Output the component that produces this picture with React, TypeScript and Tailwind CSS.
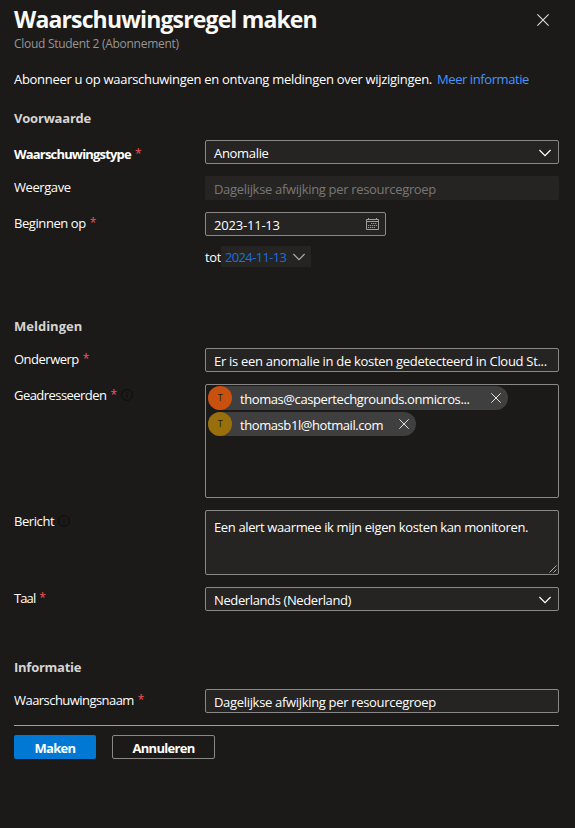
import type { ReactNode } from 'react';

function Chevron({ className = '' }: { className?: string }) {
  return (
    <svg viewBox="0 0 12 8" width="12" height="8" fill="none" stroke="currentColor" className={className}>
      <path d="M0.4 1 L6 6.6 L11.6 1" strokeWidth="1.2" />
    </svg>
  );
}

function Cross({ size, className = '' }: { size: number; className?: string }) {
  return (
    <svg viewBox="0 0 12 12" width={size} height={size} fill="none" stroke="currentColor" className={className}>
      <path d="M0.4 0.4 L11.6 11.6 M11.6 0.4 L0.4 11.6" strokeWidth="1.1" />
    </svg>
  );
}

function Calendar() {
  return (
    <svg viewBox="0 0 13 12" width="13" height="12" fill="none" stroke="#a39b98" className="mb-0.5 shrink-0">
      <path d="M0.5 1.5 H12.5 V11.5 H0.5 Z M0.5 3.5 H12.5 M2.5 0 V2 M10.5 0 V2" strokeWidth="1" />
      <path d="M5 5.5 H11 M2 7.5 H11 M2 9.5 H9" stroke="#8f93a8" strokeWidth="1" strokeDasharray="1.3 0.7" />
    </svg>
  );
}

function InfoIcon() {
  return (
    <svg viewBox="0 0 12 12" width="12" height="12" fill="none" stroke="#0d0c0b" className="ml-1 shrink-0">
      <circle cx="6" cy="6" r="5.4" strokeWidth="0.9" />
      <path d="M6 5 V9 M6 3 V4" strokeWidth="0.8" />
    </svg>
  );
}

function Label({ children, required, info, className = '' }: { children: ReactNode; required?: boolean; info?: boolean; className?: string }) {
  return (
    <div className={`flex h-6 w-[191px] shrink-0 items-center tracking-[-0.42px] whitespace-nowrap ${className}`}>
      {children}
      {required && <span className="ml-1 text-[12px] font-normal text-[#f1555b]">*</span>}
      {info && <InfoIcon />}
    </div>
  );
}

const field = 'flex h-6 items-center rounded-[2px] border border-[#8a8886] bg-[#252423] px-2 pt-px whitespace-nowrap';

function Chip({ initialColor, width, children }: { initialColor: string; width: string; children: ReactNode }) {
  return (
    <div className={`flex h-6 items-center rounded-full bg-[#3f3f3f] pr-[7px] ${width}`}>
      <span className={`flex size-6 items-center justify-center rounded-full text-[9px] text-[#201a12] ${initialColor}`}>T</span>
      <span className="ml-2 flex-1 pt-0.5 tracking-[-0.42px] whitespace-nowrap">{children}</span>
      <Cross size={10} className="text-[#f3f2f1]" />
    </div>
  );
}

export default function App() {
  return (
    <main className="h-[828px] w-[575px] overflow-hidden bg-[#1b1a19] px-[14px] pt-[5px] pr-4 font-['Open_Sans','Noto_Sans',sans-serif] text-[13px] leading-[18px] tracking-[-0.32px] text-white">
      <header className="flex h-[47px] items-start justify-between">
        <div>
          <h1 className="text-[23px] leading-[29px] font-bold tracking-[-0.85px] whitespace-nowrap text-[#faf9f8]">Waarschuwingsregel maken</h1>
          <p className="pt-px text-[12px] leading-[18px] tracking-[-0.29px] text-[#979593]">Cloud Student 2 (Abonnement)</p>
        </div>
        <Cross size={12} className="mt-[9px] mr-[10px] text-[#e1dfdd]" />
      </header>

      <p className="mt-[18px] whitespace-nowrap">
        <span className="tracking-[-0.3px]">Abonneer u op waarschuwingen en ontvang meldingen over wijzigingen.</span>
        <a className="ml-[5px] tracking-[-0.42px] text-[#4894fe]">Meer informatie</a>
      </p>

      <h2 className="mt-[21px] font-bold tracking-[-0.2px] text-[#d6d4d2]">Voorwaarde</h2>
      <section className="mt-[13px] flex flex-col gap-3">
        <div className="flex h-6">
          <Label required className="pt-1"><b className="font-bold tracking-[-0.82px]">Waarschuwingstype</b></Label>
          <div className={`${field} flex-1 justify-between pr-[7px]`}>
            <span>Anomalie</span>
            <Chevron />
          </div>
        </div>
        <div className="flex h-6">
          <Label className="pb-0.5">Weergave</Label>
          <div className="flex h-6 flex-1 items-center rounded-[2px] bg-[#252423] px-[9px] pt-0.5 text-[#797775]">Dagelijkse afwijking per resourcegroep</div>
        </div>
        <div className="flex h-6">
          <Label required className="pb-0.5">Beginnen op</Label>
          <div className={`${field} w-[181px] justify-between pr-[6px]`}>
            <span className="tracking-[-0.2px]">2023-11-13</span>
            <Calendar />
          </div>
        </div>
      </section>
      <div className="mt-[10px] ml-[191px] flex h-[21px] items-center">
        <span className="w-4">tot</span>
        <div className="flex h-[21px] w-[90px] items-center justify-between bg-[#252423] pr-[6px] pl-1 text-[#1571dc]">
          <span className="pt-px tracking-[-0.65px]">2024-11-13</span>
          <Chevron className="text-[#b3a9a3]" />
        </div>
      </div>

      <h2 className="mt-[50px] font-bold tracking-[0px] text-[#d6d4d2]">Meldingen</h2>
      <section className="mt-[13px] flex flex-col gap-3">
        <div className="flex h-6">
          <Label required className="pb-0.5"><span className="tracking-[-0.5px]">Onderwerp</span></Label>
          <div className={`${field} flex-1 tracking-[-0.3px]`}>Er is een anomalie in de kosten gedetecteerd in Cloud St...</div>
        </div>
        <div className="flex h-[114px]">
          <Label required info className="pb-0.5"><span className="tracking-[-0.55px]">Geadresseerden</span></Label>
          <div className="flex flex-1 flex-col gap-0.5 rounded-[2px] border border-[#8a8886] pt-px pl-0.5">
            <Chip initialColor="bg-[#ca5010]" width="w-[300px]">thomas@caspertechgrounds.onmicros...</Chip>
            <Chip initialColor="bg-[#986f0b]" width="w-[208px]">thomasb1l@hotmail.com</Chip>
          </div>
        </div>
        <div className="flex h-[65px]">
          <Label info className="pb-0.5">Bericht</Label>
          <div className="flex flex-1 items-end justify-between rounded-[2px] border border-[#8a8886] bg-[#252423] pl-2">
            <span className="self-start pt-[7px] tracking-[-0.37px] whitespace-nowrap">Een alert waarmee ik mijn eigen kosten kan monitoren.</span>
            <svg viewBox="0 0 8 8" width="8" height="8" stroke="#d2d0ce" strokeWidth="0.8" className="mr-px mb-px">
              <path d="M0.5 7.5 L7.5 0.5 M4.5 7.5 L7.5 4.5" />
            </svg>
          </div>
        </div>
        <div className="flex h-6">
          <Label required className="pb-0.5"><span className="tracking-[-0.9px]">Taal</span></Label>
          <div className={`${field} flex-1 justify-between pr-[7px]`}>
            <span className="tracking-[-0.38px]">Nederlands (Nederland)</span>
            <Chevron />
          </div>
        </div>
      </section>

      <h2 className="mt-[47px] font-bold tracking-[-0.25px] text-[#d6d4d2]">Informatie</h2>
      <div className="mt-[13px] flex h-6">
        <Label required className="pb-0.5"><span className="tracking-[-0.55px]">Waarschuwingsnaam</span></Label>
        <div className={`${field} flex-1`}>Dagelijkse afwijking per resourcegroep</div>
      </div>
      <footer className="mt-3 flex gap-4 border-t border-[#a19f9d] pt-[9px] font-bold tracking-[-0.7px]">
        <button className="h-6 w-[82px] rounded-[2px] bg-[#0078d4] pt-0.5">Maken</button>
        <button className="h-6 w-[103px] rounded-[2px] border border-[#8a8886] pt-px">Annuleren</button>
      </footer>
    </main>
  );
}
